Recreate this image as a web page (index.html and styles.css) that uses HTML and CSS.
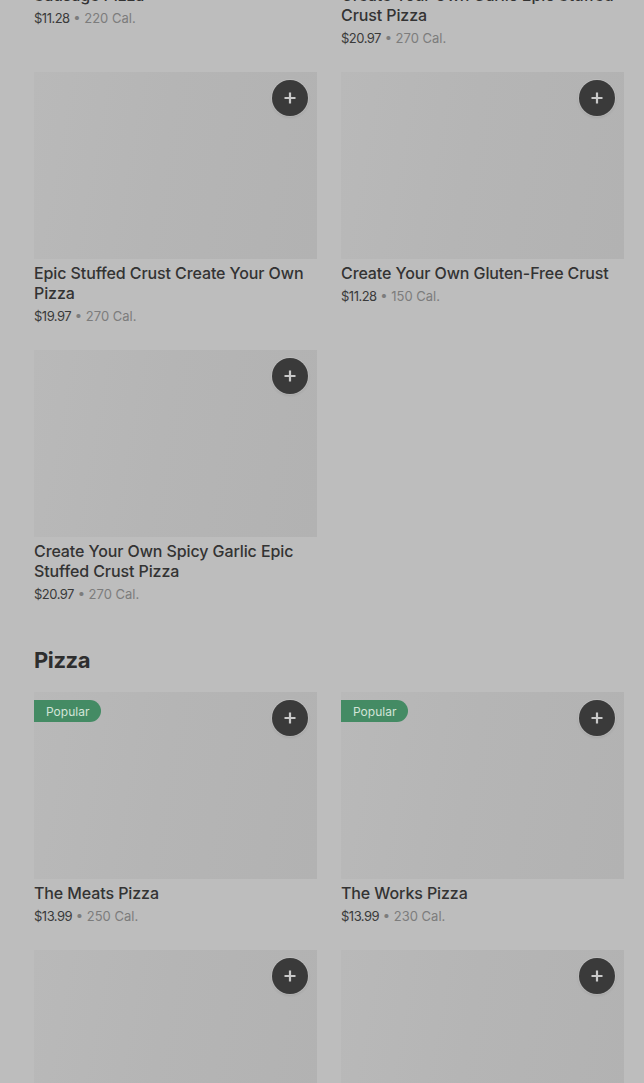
FILE: index.html
```html
<!DOCTYPE html>
<html lang="en">
<head>
<meta charset="utf-8">
<title>Menu</title>
<link rel="stylesheet" href="styles.css">
</head>
<body>
<main class="menu">
  <section class="section section-first">
    <div class="grid">
      <article class="card">
        <div class="thumb"><button class="add" aria-label="Add"><svg viewBox="0 0 14 14" width="14" height="14"><path d="M7 1.5v11M1.5 7h11" stroke="currentColor" stroke-width="2.2" fill="none"/></svg></button></div>
        <h3 class="title">Sausage Pizza</h3>
        <p class="meta"><span class="price">$11.28</span> • 220 Cal.</p>
      </article>
      <article class="card">
        <div class="thumb"><button class="add" aria-label="Add"><svg viewBox="0 0 14 14" width="14" height="14"><path d="M7 1.5v11M1.5 7h11" stroke="currentColor" stroke-width="2.2" fill="none"/></svg></button></div>
        <h3 class="title">Create Your Own Garlic Epic Stuffed Crust Pizza</h3>
        <p class="meta"><span class="price">$20.97</span> • 270 Cal.</p>
      </article>
      <article class="card">
        <div class="thumb"><button class="add" aria-label="Add"><svg viewBox="0 0 14 14" width="14" height="14"><path d="M7 1.5v11M1.5 7h11" stroke="currentColor" stroke-width="2.2" fill="none"/></svg></button></div>
        <h3 class="title">Epic Stuffed Crust Create Your Own Pizza</h3>
        <p class="meta"><span class="price">$19.97</span> • 270 Cal.</p>
      </article>
      <article class="card">
        <div class="thumb"><button class="add" aria-label="Add"><svg viewBox="0 0 14 14" width="14" height="14"><path d="M7 1.5v11M1.5 7h11" stroke="currentColor" stroke-width="2.2" fill="none"/></svg></button></div>
        <h3 class="title">Create Your Own Gluten-Free Crust</h3>
        <p class="meta"><span class="price">$11.28</span> • 150 Cal.</p>
      </article>
      <article class="card">
        <div class="thumb"><button class="add" aria-label="Add"><svg viewBox="0 0 14 14" width="14" height="14"><path d="M7 1.5v11M1.5 7h11" stroke="currentColor" stroke-width="2.2" fill="none"/></svg></button></div>
        <h3 class="title">Create Your Own Spicy Garlic Epic Stuffed Crust Pizza</h3>
        <p class="meta"><span class="price">$20.97</span> • 270 Cal.</p>
      </article>
    </div>
  </section>

  <section class="section">
    <h2 class="section-title">Pizza</h2>
    <div class="grid">
      <article class="card">
        <div class="thumb"><span class="badge">Popular</span><button class="add" aria-label="Add"><svg viewBox="0 0 14 14" width="14" height="14"><path d="M7 1.5v11M1.5 7h11" stroke="currentColor" stroke-width="2.2" fill="none"/></svg></button></div>
        <h3 class="title">The Meats Pizza</h3>
        <p class="meta"><span class="price">$13.99</span> • 250 Cal.</p>
      </article>
      <article class="card">
        <div class="thumb"><span class="badge">Popular</span><button class="add" aria-label="Add"><svg viewBox="0 0 14 14" width="14" height="14"><path d="M7 1.5v11M1.5 7h11" stroke="currentColor" stroke-width="2.2" fill="none"/></svg></button></div>
        <h3 class="title">The Works Pizza</h3>
        <p class="meta"><span class="price">$13.99</span> • 230 Cal.</p>
      </article>
      <article class="card">
        <div class="thumb"><button class="add" aria-label="Add"><svg viewBox="0 0 14 14" width="14" height="14"><path d="M7 1.5v11M1.5 7h11" stroke="currentColor" stroke-width="2.2" fill="none"/></svg></button></div>
      </article>
      <article class="card">
        <div class="thumb"><button class="add" aria-label="Add"><svg viewBox="0 0 14 14" width="14" height="14"><path d="M7 1.5v11M1.5 7h11" stroke="currentColor" stroke-width="2.2" fill="none"/></svg></button></div>
      </article>
    </div>
  </section>
</main>
</body>
</html>
```

FILE: styles.css
```css
* { box-sizing: border-box; }

html, body {
  margin: 0;
  padding: 0;
  background: #bdbdbd;
  height: 1083px;
  overflow: hidden;
}

body {
  font-family: Inter, "Noto Sans", Roboto, sans-serif;
  color: #333333;
}

.menu {
  padding: 0 20px 0 34px;
  margin-top: -206px;
}

.section + .section {
  margin-top: 40px;
}

.section-title {
  margin: 0 0 16px;
  font-size: 22px;
  line-height: 32px;
  font-weight: 700;
  color: #2e2e2e;
  letter-spacing: -0.4px;
}

.grid {
  display: grid;
  grid-template-columns: 283px 283px;
  column-gap: 24px;
  row-gap: 24px;
  align-items: start;
}

.card {
  display: flex;
  flex-direction: column;
}

.thumb {
  position: relative;
  height: 187px;
  background: linear-gradient(100deg, #b9b9b9 0%, #b5b5b5 45%, #b2b2b2 100%);
}

.add {
  position: absolute;
  top: 8px;
  right: 9px;
  width: 36px;
  height: 36px;
  border-radius: 50%;
  border: none;
  padding: 0;
  background: #3a3a3a;
  color: #c9c9c9;
  display: flex;
  align-items: center;
  justify-content: center;
  box-shadow: 0 0 0 1px rgba(255, 255, 255, 0.18), 0 1px 3px rgba(0, 0, 0, 0.15);
}

.badge {
  position: absolute;
  top: 8px;
  left: 0;
  height: 22px;
  padding: 0 12px;
  display: flex;
  align-items: center;
  background: #448b64;
  color: #d3e4d8;
  font-size: 12px;
  border-radius: 0 11px 11px 0;
}

.title {
  margin: 4px 0 0;
  font-size: 16px;
  line-height: 20px;
  font-weight: 500;
  color: #333333;
  letter-spacing: -0.1px;
}

.meta {
  margin: 3px 0 0;
  font-size: 13px;
  line-height: 20px;
  color: #7c7c7c;
}

.price {
  color: #3a3a3a;
  letter-spacing: -0.5px;
}
```
